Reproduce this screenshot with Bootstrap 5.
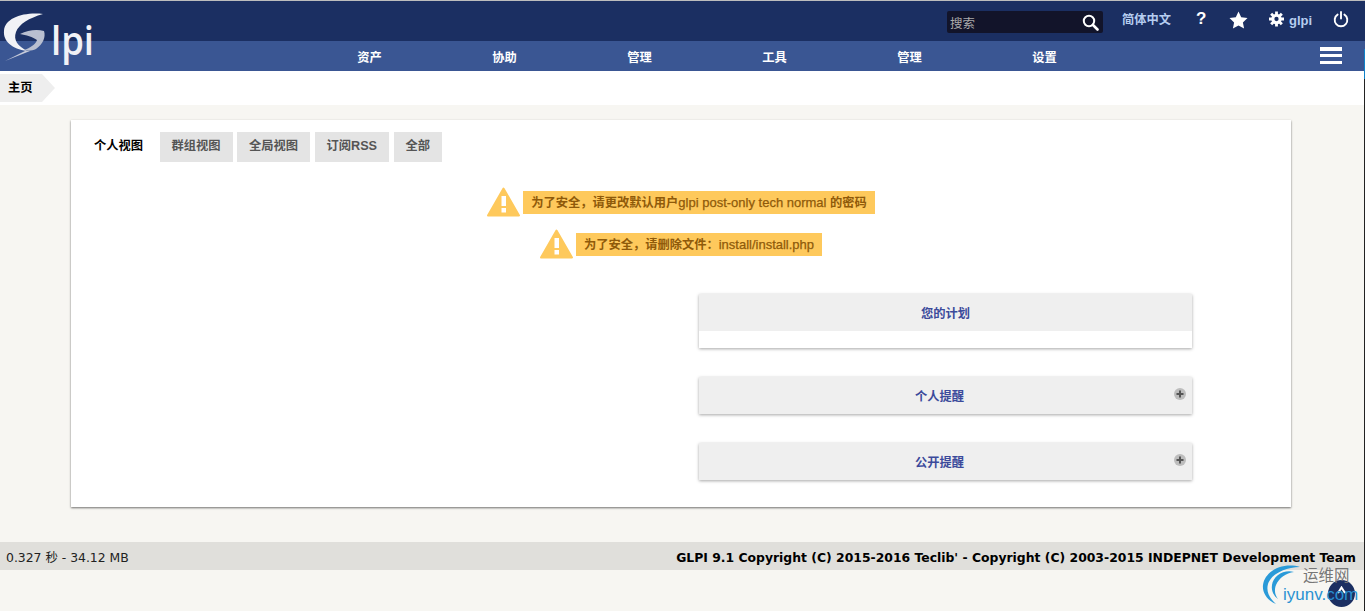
<!DOCTYPE html>
<html lang="zh">
<head>
<meta charset="UTF-8">
<meta name="viewport" content="width=device-width, initial-scale=1.0">
<title>GLPI - 主页</title>
<link href="https://cdn.jsdelivr.net/npm/bootstrap@5.3.3/dist/css/bootstrap.min.css" rel="stylesheet">
<style>
  html, body { height: 100%; }
  body { background: #f7f6f2; font-family: "Liberation Sans", "Noto Sans CJK SC", sans-serif; font-size: 12.25px; color: #000; overflow: hidden; position: relative; }
  a { text-decoration: none; }
  .top-bar { height: 41px; background: #1b2f62; border-top: 1px solid #bdbdbd; padding-top: 10px; }
  .search-box { width: 156px; height: 22px; background: #12142a; border-radius: 2px; margin-left: 947px; padding: 0 4px 0 3px; color: #aaa; font-size: 12.5px; }
  .search-box span { padding-top: 4px; }
  .lang-link { color: #b6cdf0; font-weight: 700; margin-left: 19px; width: 50px; white-space: nowrap; }
  .top-icon { position: absolute; top: 11px; }
  .user-link { position: absolute; top: 11px; left: 1289px; color: #b6cdf0; font-weight: 700; font-size: 13px; }
  .menu-bar { height: 30px; background: #3a5693; padding-left: 302px; }
  .menu-item { width: 135px; text-align: center; color: #fff; font-weight: 700; line-height: 34px; }
  .burger { position: absolute; left: 1320px; top: 47px; width: 22px; height: 17px; display: flex; flex-direction: column; justify-content: space-between; }
  .burger span { height: 3.5px; background: #fff; display: block; }
  .glpi-logo { position: absolute; left: 3px; top: 12px; width: 94px; height: 54px; }
  .logo-word { position: absolute; left: 48px; top: 2px; color: #f1f2f6; font-family: "Open Sans", sans-serif; font-weight: 600; font-size: 40px; line-height: 52px; transform: scaleX(.91); transform-origin: left; }
  .crumb-bar { height: 34px; background: #fff; padding-top: 3px; }
  .crumb { display: inline-block; height: 28px; width: 42px; padding-left: 8px; background: #eee; line-height: 29px; font-weight: 700; position: relative; }
  .crumb::after { content: ""; position: absolute; left: 42px; top: 0; border-left: 13px solid #eee; border-top: 14px solid transparent; border-bottom: 14px solid transparent; }
  .main-box { width: 1220px; height: 387px; margin: 15px 0 0 71px; background: #fff; box-shadow: 0 1px 2px rgba(0,0,0,.55); padding-top: 12px; }
  .tab-row { padding-left: 23px; gap: 4.5px; height: 30px; }
  .tab-item { background: #e4e4e4; color: #555; font-weight: 700; padding: 0 12px; line-height: 28px; }
  .tab-item.current { background: #fff; color: #000; padding-left: 0; }
  .tab-latin { font-size: 12.7px; }
  .warn-row { height: 30px; }
  .warn-first { margin-top: 25px; }
  .warn-second { margin-top: 12px; }
  .warn-text { background: #fec95c; color: #8f5a0a; font-weight: 700; padding: 0 8px; line-height: 24px; height: 23px; margin-left: 3px; }
  .warn-text span { font-size: 13px; font-weight: 400; -webkit-text-stroke: .25px #8f5a0a; }
  .panel-col { width: 493px; margin-left: 628px; margin-top: 35px; }
  .fold-box { box-shadow: 0 1px 3px rgba(0,0,0,.35); margin-bottom: 29px; background: #fff; position: relative; }
  .fold-head { height: 37px; background: #efefef; color: #3b4a9b; font-weight: 700; text-align: center; line-height: 40px; }
  .fold-side { padding-right: 12px; }
  .fold-body { height: 17px; }
  .plus-btn { position: absolute; right: 6px; top: 11px; width: 12px; height: 12px; }
  .page-foot { height: 28px; margin-top: 35px; background: #e0dfdb; padding: 0 9px 0 6px; font-family: "DejaVu Sans", "Noto Sans CJK SC", sans-serif; font-size: 12.4px; line-height: 31px; color: #222; }
  .page-foot strong { color: #000; font-weight: 700; font-size: 12.4px; }
  .site-mark { position: absolute; left: 1262px; top: 564px; width: 102px; height: 47px; z-index: 2; }
  .mark-cn { position: absolute; left: 41px; top: 3px; font-size: 15.5px; color: #777; line-height: 18px; }
  .mark-en { position: absolute; left: 21px; top: 21px; font-size: 17px; color: #2a92d2; line-height: 20px; }
  .up-btn { position: absolute; left: 1328px; top: 580px; width: 27px; height: 27px; border-radius: 50%; background: #1b2f62; }
  .up-btn svg { position: absolute; left: 9px; top: 6px; }
  .edge-line { position: absolute; right: 0; top: 49px; bottom: 0; width: 1px; background: #222; }
  .edge-line::before { content: ""; display: block; height: 30px; background: #0f82c8; }
</style>
</head>
<body>
  <div class="top-bar d-flex">
    <div class="search-box d-flex align-items-center justify-content-between">
      <span>搜索</span>
      <svg width="17" height="17" viewBox="0 0 17 17"><circle cx="7" cy="7" r="5.2" fill="none" stroke="#fff" stroke-width="2"/><path d="M11 11l4.5 4.5" stroke="#fff" stroke-width="2.6" stroke-linecap="round"/></svg>
    </div>
    <a class="lang-link" href="#">简体中文</a>
  </div>
  <a href="#" class="top-icon fw-bold text-white" style="left:1196px;top:9px;font-size:17px;line-height:20px;">?</a>
  <svg class="top-icon" style="left:1229px" width="19" height="18" viewBox="0 0 19 18"><path d="M9.5 0.5l2.7 5.8 6.3.8-4.6 4.3 1.2 6.2-5.6-3.1-5.6 3.1 1.2-6.2L.5 7.1l6.3-.8z" fill="#fff"/></svg>
  <svg class="top-icon" style="left:1269px" width="15" height="16" viewBox="0 0 16 16"><circle cx="8" cy="8" r="3.9" fill="none" stroke="#fff" stroke-width="3.2"/><path d="M8 0v16M0 8h16M2.3 2.3l11.4 11.4M13.7 2.3L2.3 13.7" stroke="#fff" stroke-width="3"/><circle cx="8" cy="8" r="2.3" fill="#1b2f62"/></svg>
  <a class="user-link" href="#">glpi</a>
  <svg class="top-icon" style="left:1333px" width="16" height="17" viewBox="0 0 16 17"><path d="M4.6 3.6a6.3 6.3 0 1 0 6.8 0" fill="none" stroke="#fff" stroke-width="1.9" stroke-linecap="round"/><path d="M8 1v6.5" stroke="#fff" stroke-width="1.9" stroke-linecap="round"/></svg>

  <nav class="menu-bar d-flex">
    <a class="menu-item" href="#">资产</a>
    <a class="menu-item" href="#">协助</a>
    <a class="menu-item" href="#">管理</a>
    <a class="menu-item" href="#">工具</a>
    <a class="menu-item" href="#">管理</a>
    <a class="menu-item" href="#">设置</a>
  </nav>
  <div class="burger"><span></span><span></span><span></span></div>

  <div class="glpi-logo">
    <svg width="50" height="52" viewBox="0 0 50 52" class="position-absolute top-0 start-0">
      <path d="M40 2C20 0 2 6 1 19c-1 10 8 18 23 20C15 34 10 28 13 20 16 12 26 6 40 2z" fill="#f1f2f6"/>
      <path d="M17 22C25 18 34 17 41 19c2 6-1 13-8 18-4 2-8 2-12 1 6-2 12-6 13-10-4-3-11-5-17-6z" fill="#b9bfd0"/>
      <path d="M2 49L22 39l5 0z" fill="#c6cbda"/>
    </svg>
    <span class="logo-word">lpi</span>
  </div>

  <div class="crumb-bar"><a class="crumb text-black" href="#">主页</a></div>

  <div class="main-box">
    <div class="tab-row d-flex">
      <a class="tab-item current" href="#">个人视图</a>
      <a class="tab-item" href="#">群组视图</a>
      <a class="tab-item" href="#">全局视图</a>
      <a class="tab-item" href="#">订阅<span class="tab-latin">RSS</span></a>
      <a class="tab-item" href="#">全部</a>
    </div>
    <div class="warn-row warn-first d-flex justify-content-center align-items-center">
      <svg width="33" height="30" viewBox="0 0 33 30"><path d="M16.5 1.5L32 28.5H1z" fill="#fec95c" stroke="#fec95c" stroke-width="2" stroke-linejoin="round"/><rect x="14.5" y="9" width="4.5" height="10" fill="#fff"/><rect x="14.5" y="21" width="4.5" height="4.5" fill="#fff"/></svg>
      <div class="warn-text">为了安全，请更改默认用户<span>glpi post-only tech normal</span> 的密码</div>
    </div>
    <div class="warn-row warn-second d-flex justify-content-center align-items-center">
      <svg width="33" height="30" viewBox="0 0 33 30"><path d="M16.5 1.5L32 28.5H1z" fill="#fec95c" stroke="#fec95c" stroke-width="2" stroke-linejoin="round"/><rect x="14.5" y="9" width="4.5" height="10" fill="#fff"/><rect x="14.5" y="21" width="4.5" height="4.5" fill="#fff"/></svg>
      <div class="warn-text">为了安全，请删除文件：<span>install/install.php</span></div>
    </div>
    <div class="panel-col">
      <div class="fold-box">
        <div class="fold-head">您的计划</div>
        <div class="fold-body"></div>
      </div>
      <div class="fold-box">
        <div class="fold-head fold-side">个人提醒</div>
        <svg class="plus-btn" viewBox="0 0 12 12"><circle cx="6" cy="6" r="6" fill="#bdbdbd"/><path d="M2.5 6h7M6 2.5v7" stroke="#555" stroke-width="2"/></svg>
      </div>
      <div class="fold-box">
        <div class="fold-head fold-side">公开提醒</div>
        <svg class="plus-btn" viewBox="0 0 12 12"><circle cx="6" cy="6" r="6" fill="#bdbdbd"/><path d="M2.5 6h7M6 2.5v7" stroke="#555" stroke-width="2"/></svg>
      </div>
    </div>
  </div>

  <footer class="page-foot d-flex justify-content-between">
    <span>0.327 秒 - 34.12 MB</span>
    <strong>GLPI 9.1 Copyright (C) 2015-2016 Teclib' - Copyright (C) 2003-2015 INDEPNET Development Team</strong>
  </footer>

  <a class="up-btn" href="#" aria-label="top"><svg width="9" height="8" viewBox="0 0 9 8"><path d="M1 7l3.5-5.5L8 7" fill="none" stroke="#fff" stroke-width="2"/></svg></a>
  <div class="site-mark">
    <svg class="position-absolute top-0 start-0" width="42" height="42" viewBox="0 0 42 42">
      <path d="M38 3C22-2 3 6 1 21c-1 8 5 16 13 19C7 34 4 27 6 20 9 10 24 3 38 3z" fill="#2a9ad8"/>
      <path d="M32 8C22 5 11 12 10 21c-1 6 2 11 6 14-3-4-4-9-2-14 3-7 10-12 18-13z" fill="#2a9ad8"/>
    </svg>
    <span class="mark-cn">运维网</span>
    <span class="mark-en">iyunv.com</span>
  </div>
  <div class="edge-line"></div>
</body>
</html>
